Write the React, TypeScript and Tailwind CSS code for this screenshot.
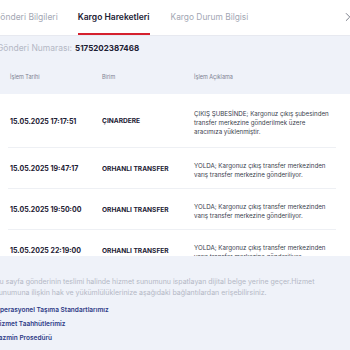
import { ChevronRight } from 'lucide-react';

const rows = [
  {
    date: '15.05.2025 17:17:51',
    unit: 'ÇINARDERE',
    desc: 'ÇIKIŞ ŞUBESİNDE; Kargonuz çıkış şubesinden transfer merkezine gönderilmek üzere aracımıza yüklenmiştir.',
    h: 'h-[54px]',
  },
  {
    date: '15.05.2025 19:47:17',
    unit: 'ORHANLI TRANSFER',
    desc: 'YOLDA; Kargonuz çıkış transfer merkezinden varış transfer merkezine gönderiliyor.',
    h: 'h-[41px]',
  },
  {
    date: '15.05.2025 19:50:00',
    unit: 'ORHANLI TRANSFER',
    desc: 'YOLDA; Kargonuz çıkış transfer merkezinden varış transfer merkezine gönderiliyor.',
    h: 'h-[41px]',
  },
  {
    date: '15.05.2025 22:19:00',
    unit: 'ORHANLI TRANSFER',
    desc: 'YOLDA; Kargonuz çıkış transfer merkezinden varış transfer merkezine gönderiliyor.',
    h: 'h-[41px]',
  },
];

const links = ['Operasyonel Taşıma Standartlarımız', 'Hizmet Taahhütlerimiz', 'Tazmin Prosedürü'];

export default function App() {
  return (
    <div className="w-[350px] h-[350px] overflow-hidden bg-[#eff2f9] font-['Inter',sans-serif]">
      {/* tabs */}
      <div className="relative flex items-center h-[36px] bg-white border-b border-[#e7e9f0]">
        <div className="flex items-stretch h-full -ml-[6px]">
          <span className="flex items-center text-[8.5px] text-[#a3a7b4] pr-[20px]">Gönderi Bilgileri</span>
          <span className="relative flex items-center text-[8.5px] font-semibold text-[#1c2033]">
            Kargo Hareketleri
            <span className="absolute left-0 right-0 bottom-0 h-[2px] bg-[#d5202e]" />
          </span>
          <span className="flex items-center text-[8.4px] text-[#a3a7b4] pl-[21px]">Kargo Durum Bilgisi</span>
        </div>
        <ChevronRight className="absolute right-[-5px] top-[10px] w-[14px] h-[14px] text-[#6b6f7c]" strokeWidth={1.5} />
      </div>

      {/* number */}
      <div className="h-[24px] flex items-center -ml-[3px] text-[8.5px]">
        <span className="text-[#b4b8c5]">Gönderi Numarası:</span>
        <span className="ml-[3px] text-[8px] font-bold text-[#1c2033]">5175202387468</span>
      </div>

      {/* table header */}
      <div className="h-[34px] grid grid-cols-[92px_92px_1fr] items-center pl-[10px] text-[5.5px] text-[#7d8190]">
        <span>İşlem Tarihi</span>
        <span>Birim</span>
        <span>İşlem Açıklama</span>
      </div>

      {/* table body */}
      <div className="bg-white h-[162px] overflow-hidden pl-[8px] pr-[14px]">
        {rows.map((r, i) => (
          <div
            key={i}
            className={`${r.h} grid grid-cols-[92px_92px_1fr] items-center pl-[2px] pt-[3px] border-b border-[#eef0f4]`}
          >
            <span className="text-[7px] font-bold text-[#1c2033]">{r.date}</span>
            <span className="text-[6.6px] font-bold text-[#1c2033]">{r.unit}</span>
            <span className="text-[6.2px] leading-[9px] text-[#3a3e4d] pr-[4px]">{r.desc}</span>
          </div>
        ))}
      </div>

      {/* footer */}
      <div className="-ml-[5px] pt-[20px] pr-[10px]">
        <p className="text-[7px] leading-[11px] text-[#b4b8c5]">
          Bu sayfa gönderinin teslimi halinde hizmet sunumunu ispatlayan dijital belge yerine geçer.Hizmet sunumuna ilişkin hak ve yükümlülüklerinize aşağıdaki bağlantılardan erişebilirsiniz.
        </p>
        <div className="mt-[6px] flex flex-col">
          {links.map(l => (
            <a key={l} className="h-[14px] flex items-center text-[6.5px] font-semibold text-[#2d3a86]">
              {l}
            </a>
          ))}
        </div>
      </div>
    </div>
  );
}
